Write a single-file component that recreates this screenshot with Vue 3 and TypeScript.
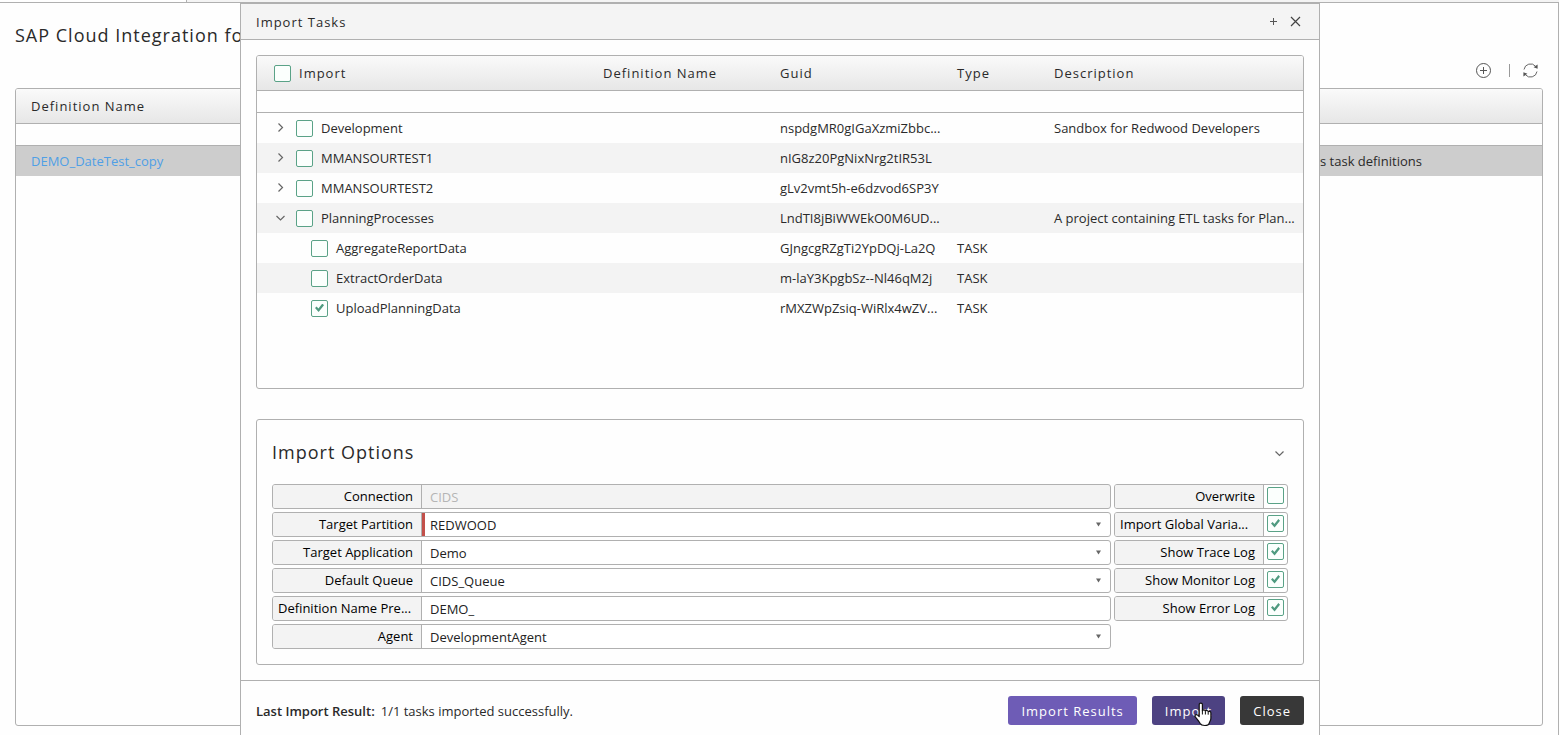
<script setup lang="ts">
import { ref } from 'vue'

interface TaskRow {
  name: string
  guid: string
  type?: string
  description?: string
  level: number
  expanded?: boolean
  checked: boolean
}

interface Field {
  id: string
  label: string
  value: string
  kind: 'readonly' | 'select' | 'text'
  required?: boolean
}

const allChecked = ref(false)

const rows = ref<TaskRow[]>([
  { name: 'Development', guid: 'nspdgMR0gIGaXzmiZbbc...', description: 'Sandbox for Redwood Developers', level: 0, checked: false },
  { name: 'MMANSOURTEST1', guid: 'nIG8z20PgNixNrg2tIR53L', level: 0, checked: false },
  { name: 'MMANSOURTEST2', guid: 'gLv2vmt5h-e6dzvod6SP3Y', level: 0, checked: false },
  { name: 'PlanningProcesses', guid: 'LndTI8jBiWWEkO0M6UD...', description: 'A project containing ETL tasks for Plan...', level: 0, expanded: true, checked: false },
  { name: 'AggregateReportData', guid: 'GJngcgRZgTi2YpDQj-La2Q', type: 'TASK', level: 1, checked: false },
  { name: 'ExtractOrderData', guid: 'm-laY3KpgbSz--Nl46qM2j', type: 'TASK', level: 1, checked: false },
  { name: 'UploadPlanningData', guid: 'rMXZWpZsiq-WiRlx4wZV...', type: 'TASK', level: 1, checked: true },
])

const fields = ref<Field[]>([
  { id: 'connection', label: 'Connection', value: 'CIDS', kind: 'readonly' },
  { id: 'partition', label: 'Target Partition', value: 'REDWOOD', kind: 'select', required: true },
  { id: 'application', label: 'Target Application', value: 'Demo', kind: 'select' },
  { id: 'queue', label: 'Default Queue', value: 'CIDS_Queue', kind: 'select' },
  { id: 'prefix', label: 'Definition Name Pre...', value: 'DEMO_', kind: 'text' },
  { id: 'agent', label: 'Agent', value: 'DevelopmentAgent', kind: 'select' },
])

const flags = ref([
  { id: 'overwrite', label: 'Overwrite', checked: false },
  { id: 'globals', label: 'Import Global Varia...', checked: true },
  { id: 'trace', label: 'Show Trace Log', checked: true },
  { id: 'monitor', label: 'Show Monitor Log', checked: true },
  { id: 'error', label: 'Show Error Log', checked: true },
])

const isClipped = (label: string): boolean => label.endsWith('...')
</script>

<template>
  <div class="page">
    <div class="tabstrip"><div class="tab"></div></div>
    <main class="content">
      <h1 class="page-title">SAP Cloud Integration for</h1>
      <div class="toolbar">
        <button class="icon-btn" type="button" aria-label="Add">
          <svg width="17" height="17" viewBox="0 0 17 17" fill="none" stroke="#555">
            <circle cx="8.5" cy="8.5" r="7" />
            <path d="M8.5 5v7M5 8.5h7" />
          </svg>
        </button>
        <span class="divider"></span>
        <button class="icon-btn" type="button" aria-label="Refresh">
          <svg width="17" height="17" viewBox="0 0 17 17" fill="none" stroke="#666">
            <path d="M2 7.5A6.6 6.6 0 0 1 13.6 4.3M15 9.5A6.6 6.6 0 0 1 3.4 12.7" />
            <path d="M15.6 2.6v4.2l-4-1.6zM1.4 14.4v-4.2l4 1.6z" fill="#555" stroke="none" />
          </svg>
        </button>
      </div>
      <div class="grid back-grid">
        <table>
          <colgroup><col class="c-main"><col class="c-tail"></colgroup>
          <thead>
            <tr class="head"><th>Definition Name</th><th></th></tr>
            <tr class="filter"><td colspan="2"></td></tr>
          </thead>
          <tbody>
            <tr class="selected">
              <td><a href="#">DEMO_DateTest_copy</a></td>
              <td class="tail">s task definitions</td>
            </tr>
          </tbody>
        </table>
      </div>
    </main>

    <section class="dialog" role="dialog" aria-labelledby="dialog-title">
      <header class="titlebar">
        <h2 id="dialog-title">Import Tasks</h2>
        <button class="icon-btn" type="button" aria-label="Maximize">
          <svg width="11" height="11" viewBox="0 0 11 11" stroke="#555"><path d="M5.5 2v7M2 5.5h7" /></svg>
        </button>
        <button class="icon-btn" type="button" aria-label="Close dialog">
          <svg width="11" height="11" viewBox="0 0 11 11" stroke="#444" stroke-width="1.2"><path d="M1 1l9 9M10 1l-9 9" /></svg>
        </button>
      </header>

      <div class="body">
        <div class="grid task-grid">
          <table>
            <colgroup>
              <col class="c-import"><col class="c-mid"><col class="c-mid"><col class="c-type"><col>
            </colgroup>
            <thead>
              <tr class="head">
                <th>
                  <label class="check-all"><input v-model="allChecked" type="checkbox">Import</label>
                </th>
                <th>Definition Name</th>
                <th>Guid</th>
                <th>Type</th>
                <th>Description</th>
              </tr>
              <tr class="filter"><td colspan="5"></td></tr>
            </thead>
            <tbody>
              <tr v-for="row in rows" :key="row.guid">
                <td>
                  <div class="node" :class="{ child: row.level === 1 }">
                    <button v-if="row.level === 0" class="icon-btn" type="button" :aria-label="'Toggle ' + row.name">
                      <svg width="11" height="11" viewBox="0 0 11 11" fill="none" stroke="#666" stroke-width="1.2">
                        <path :d="row.expanded ? 'M1.5 3l4 4 4-4' : 'M3.5 0.5l4 4-4 4'" />
                      </svg>
                    </button>
                    <label><input v-model="row.checked" type="checkbox">{{ row.name }}</label>
                  </div>
                </td>
                <td></td>
                <td>{{ row.guid }}</td>
                <td>{{ row.type }}</td>
                <td>{{ row.description }}</td>
              </tr>
            </tbody>
          </table>
        </div>

        <div class="options">
          <div class="options-head">
            <h3>Import Options</h3>
            <button class="icon-btn" type="button" aria-label="Collapse options">
              <svg width="11" height="11" viewBox="0 0 11 11" fill="none" stroke="#666" stroke-width="1.2">
                <path d="M1.5 4.5l4 4 4-4" />
              </svg>
            </button>
          </div>
          <form class="form" @submit.prevent>
            <div class="column fields">
              <div v-for="f in fields" :key="f.id" class="field" :class="{ disabled: f.kind === 'readonly', required: f.required }">
                <label :for="f.id" :class="{ clipped: isClipped(f.label) }">{{ f.label }}</label>
                <template v-if="f.kind === 'select'">
                  <select :id="f.id" v-model="f.value"><option>{{ f.value }}</option></select>
                  <svg class="arrow" width="5" height="5" viewBox="0 0 5 5"><path d="M0 0.5h5L2.5 4.5z" fill="#666" /></svg>
                </template>
                <input v-else :id="f.id" v-model="f.value" type="text" :disabled="f.kind === 'readonly'">
              </div>
            </div>
            <div class="column">
              <div v-for="f in flags" :key="f.id" class="field flag">
                <label :for="f.id" :class="{ clipped: isClipped(f.label) }">{{ f.label }}</label>
                <span class="box"><input :id="f.id" v-model="f.checked" type="checkbox"></span>
              </div>
            </div>
          </form>
        </div>
      </div>

      <footer class="footer">
        <p><span class="result-label">Last Import Result:</span>1/1 tasks imported successfully.</p>
        <button class="btn" type="button">Import Results</button>
        <button class="btn active" type="button">
          Import
          <svg class="pointer" width="19" height="25" viewBox="0 0 19 25">
            <path
              d="M5.2 2.6c0-2.1 3.2-2.1 3.2 0v6.2c.5-1.4 2.8-1.2 3 .3.7-1.1 2.7-.8 2.8.7.8-.9 2.700-.5 2.700 1.200v5.200c0 2.300-1.300 3.500-1.700 5.100-.5 1.700-2 2.200-4.300 2.200-2.500 0-4-.5-4.900-2.200C5.100 19.500 3.500 17.600 1.400 15.100c-1.300-1.700.7-3.200 2.200-2l1.600 1.500z"
              fill="#fff" stroke="#111" stroke-width="1.2" stroke-linejoin="round" />
            <path d="M8.4 8.5v4M11.4 9.5v3M14.2 10.2v2.5" stroke="#111" fill="none" />
          </svg>
        </button>
        <button class="btn dark" type="button">Close</button>
      </footer>
    </section>
  </div>
</template>

<style>
body {
  margin: 0;
  background: #fefefe;
}
</style>

<style scoped>
* {
  box-sizing: border-box;
}

.page {
  position: relative;
  display: flex;
  flex-direction: column;
  height: 100vh;
  overflow: hidden;
  padding-right: 1px;
  font: 13px/18px "Open Sans", "Noto Sans", sans-serif;
  color: #2a2a2a;
}

h1, h2, h3, p {
  margin: 0;
  font-weight: 400;
}

.tabstrip {
  height: 3px;
  flex: none;
  background: #f4f4f4;
  border-bottom: 1px solid #b0b0b0;
}

.tab {
  width: 187px;
  height: 2px;
  background: #fff;
  border-right: 1px solid #b0b0b0;
}

.content {
  flex: 1;
  display: flex;
  flex-direction: column;
  padding: 20px 15px 9px;
  border-right: 1px solid #b0b0b0;
}

.page-title {
  font-size: 18px;
  line-height: 24px;
  letter-spacing: 1px;
}

.toolbar {
  display: flex;
  justify-content: flex-end;
  align-items: center;
  gap: 12px;
  height: 17px;
  margin: 15px 4px 9px 0;
}

.divider {
  width: 1px;
  height: 13px;
  margin: 0 0 0 5px;
  background: #999;
}

.icon-btn {
  display: flex;
  padding: 0;
  border: 0;
  background: none;
}

.grid {
  border: 1px solid #b0b0b0;
  border-radius: 3px;
  overflow: hidden;
}

.back-grid {
  flex: 1;
}

table {
  width: 100%;
  table-layout: fixed;
  border-collapse: separate;
  border-spacing: 0;
}

th, td {
  height: 30px;
  padding: 0 8px;
  text-align: left;
  font-weight: 400;
  white-space: nowrap;
}

.head th {
  height: 35px;
  letter-spacing: 1px;
  border-bottom: 1px solid #b0b0b0;
}

.head {
  background: linear-gradient(#fafafa, #e6e6e6);
}

.filter td {
  height: 22px;
  border-bottom: 1px solid #b0b0b0;
}

.back-grid th, .back-grid td {
  padding-left: 15px;
}

.back-grid .tail {
  padding-left: 0;
}

.c-tail {
  width: 222px;
}

.selected {
  background: #cdcdcd;
}

.selected a {
  color: #4f9fe6;
  text-decoration: none;
}

.dialog {
  position: absolute;
  top: 3px;
  bottom: 0;
  left: 240px;
  right: 240px;
  display: flex;
  flex-direction: column;
  overflow: hidden;
  background: #fefefe;
  border: 1px solid #b0b0b0;
  border-bottom: 0;
}

.titlebar {
  display: flex;
  flex: none;
  align-items: center;
  gap: 11px;
  height: 36px;
  padding: 0 18px 0 15px;
  background: #f4f4f4;
  border-bottom: 1px solid #b0b0b0;
}

.titlebar h2 {
  flex: 1;
  font-size: 13px;
  letter-spacing: 1px;
}

.body {
  display: flex;
  flex: none;
  flex-direction: column;
  gap: 30px;
  padding: 15px;
  border-bottom: 1px solid #b0b0b0;
}

.task-grid {
  height: 334px;
}

.task-grid tbody tr:nth-child(even) {
  background: #f3f3f3;
}

.c-import {
  width: 338px;
}

.c-mid {
  width: 177px;
}

.c-type {
  width: 97px;
}

.check-all {
  display: flex;
  align-items: center;
  gap: 8px;
  padding-left: 9px;
}

.node, .node label {
  display: flex;
  align-items: center;
  gap: 8px;
}

.node {
  gap: 10px;
  padding-left: 10px;
}

.node.child {
  padding-left: 46px;
}

input[type="checkbox"] {
  appearance: none;
  flex: none;
  width: 17px;
  height: 17px;
  margin: 0;
  border: 1px solid #5aa287;
  border-radius: 2px;
  background: #fbfffd;
}

input[type="checkbox"]:checked::before {
  content: "";
  display: block;
  width: 9px;
  height: 9px;
  margin: 3px;
  background: #4f9b80;
  clip-path: polygon(0 50%, 18% 32%, 38% 55%, 82% 0, 100% 20%, 40% 95%);
}

.options {
  padding: 20px 15px 15px;
  border: 1px solid #b0b0b0;
  border-radius: 3px;
}

.options-head {
  display: flex;
  align-items: center;
  justify-content: space-between;
  padding-right: 3px;
  margin-bottom: 20px;
}

.options-head h3 {
  font-size: 18px;
  line-height: 24px;
  letter-spacing: 1px;
}

.form {
  display: flex;
  gap: 3px;
}

.column {
  display: flex;
  flex-direction: column;
  gap: 3px;
}

.fields {
  flex: 1;
}

.field {
  position: relative;
  display: flex;
  height: 25px;
  border: 1px solid #b0b0b0;
  border-radius: 3px;
  overflow: hidden;
  background: #fff;
}

.field label {
  flex: none;
  width: 149px;
  padding: 0 8px 0 5px;
  line-height: 23px;
  text-align: right;
  white-space: nowrap;
  color: #000;
  background: #f3f3f3;
  border-right: 1px solid #b0b0b0;
}

.field label.clipped {
  text-align: left;
}

.field select, .field input[type="text"] {
  appearance: none;
  flex: 1;
  min-width: 0;
  margin: 0;
  padding: 1px 8px 0;
  border: 0;
  outline: 0;
  font: inherit;
  color: #222;
  background: transparent;
}

.field.disabled {
  background: #f3f3f3;
}

.field.disabled input[type="text"] {
  color: #b5b5b5;
}

.field.required select {
  padding-left: 5px;
  border-left: 3px solid #c2504a;
}

.arrow {
  position: absolute;
  right: 9px;
  top: 9px;
  pointer-events: none;
}

.flag {
  width: 174px;
}

.box {
  display: flex;
  flex: 1;
  padding: 2px 3px;
}

.footer {
  display: flex;
  flex: none;
  align-items: center;
  gap: 15px;
  padding: 15px;
}

.footer p {
  flex: 1;
}

.result-label {
  margin-right: 6px;
  font-weight: 600;
}

.btn {
  position: relative;
  height: 29px;
  padding: 0 13px;
  border: 0;
  border-radius: 3px;
  font: inherit;
  letter-spacing: 1px;
  color: #fff;
  background: #6e5cb6;
}

.btn.active {
  background: #4d4282;
}

.btn.dark {
  background: #383838;
}

.pointer {
  position: absolute;
  left: 42px;
  top: 6px;
}
</style>
